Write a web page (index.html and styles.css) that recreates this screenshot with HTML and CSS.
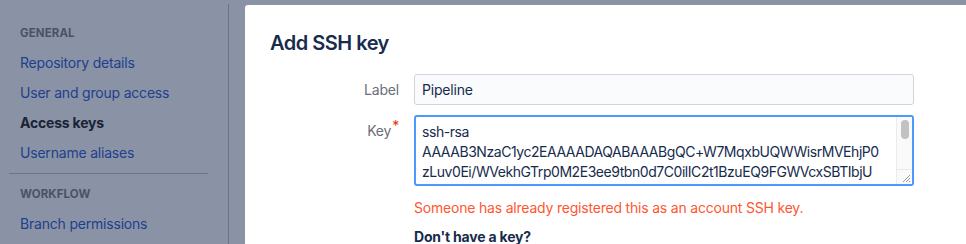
FILE: index.html
```html
<!DOCTYPE html>
<html lang="en">
    <head>
        <meta charset="utf-8" />
        <title>Add SSH key</title>
        <link rel="stylesheet" href="styles.css">
    </head>
    <body>
        <div class="page">
            <aside class="sidebar">
                <h4 class="nav-heading">General</h4>
                <ul class="nav-list">
                    <li><a href="#">Repository details</a></li>
                    <li><a href="#">User and group access</a></li>
                    <li class="current">Access keys</li>
                    <li><a href="#">Username aliases</a></li>
                </ul>
                <hr class="nav-divider">
                <h4 class="nav-heading">Workflow</h4>
                <ul class="nav-list">
                    <li><a href="#">Branch permissions</a></li>
                </ul>
            </aside>
            <div class="rule"></div>
            <main class="dialog">
                <h2 class="dialog-title">Add SSH key</h2>
                <form class="form">
                    <div class="field">
                        <label for="label">Label</label>
                        <input type="text" id="label" class="text-input" value="Pipeline">
                    </div>
                    <div class="field">
                        <label for="key">Key<span class="required">*</span></label>
                        <div class="field-body">
                            <div class="key-wrap">
                                <textarea id="key" class="key-input" spellcheck="false">ssh-rsa
AAAAB3NzaC1yc2EAAAADAQABAAABgQC+W7MqxbUQWWisrMVEhjP0
zLuv0Ei/WVekhGTrp0M2E3ee9tbn0d7C0ilIC2t1BzuEQ9FGWVcxSBTIbjU
Xk2pQ7vR1mNcd8YtLs0aZ3uHfWq9eJbGt4oKi6nPyVx5rDlMs2TgA7hCwE
user@pipeline</textarea>
                                <span class="scrollbar">
                                    <span class="thumb"></span>
                                    <span class="grip">
                                        <svg width="9" height="9" viewBox="0 0 9 9"><path d="M1 8L8 1M4 8L8 4M7 8L8 7" stroke="#8c8c8c" stroke-width="0.9" fill="none"/></svg>
                                    </span>
                                </span>
                            </div>
                            <p class="error">Someone has already registered this as an account SSH key.</p>
                            <h5 class="hint">Don't have a key?</h5>
                        </div>
                    </div>
                </form>
            </main>
        </div>
    </body>
</html>
```

FILE: styles.css
```css
* {
    margin: 0;
    padding: 0;
    box-sizing: border-box;
    list-style: none;
    font-family: "Inter", "Noto Sans", sans-serif;
}

body {
    background: #8a93a6;
    overflow: hidden;
}

.page {
    display: flex;
    height: 244px;
    padding-top: 4px;
}

.sidebar {
    width: 228px;
    padding: 22px 20px 0 9px;
    flex-shrink: 0;
}

.nav-heading {
    padding-left: 11px;
    font-size: 11.5px;
    font-weight: 700;
    text-transform: uppercase;
    color: #4b5262;
    line-height: 14px;
    margin-bottom: 8px;
    letter-spacing: 0.1px;
}

.nav-list li {
    padding-left: 11px;
    font-size: 14px;
    line-height: 30px;
    color: #1b2235;
    letter-spacing: -0.2px;
}

.nav-list a {
    color: #213f8c;
    text-decoration: none;
}

.nav-list .current {
    font-weight: 700;
}

.nav-divider {
    border: none;
    border-top: 1px solid #6b7384;
    margin: 5px 0 13px;
}

.rule {
    width: 1px;
    background: #6b7386;
    flex-shrink: 0;
}

.dialog {
    flex: 1;
    margin-left: 16px;
    margin-top: 1px;
    background: #fff;
    border-radius: 3px 0 0 0;
    padding: 26px 25px 0;
}

.dialog-title {
    font-size: 20px;
    font-weight: 600;
    color: #172b4d;
    line-height: 24px;
    letter-spacing: -0.5px;
}

.form {
    margin-top: 19px;
    display: flex;
    flex-direction: column;
    gap: 10px;
}

.field {
    display: flex;
    gap: 15px;
}

.field label {
    width: 129px;
    text-align: right;
    font-size: 14px;
    line-height: 31px;
    color: #6b6f78;
    letter-spacing: -0.2px;
}

.field label .required {
    color: #de350b;
    position: relative;
    top: -5px;
    margin-left: 1px;
}

.text-input {
    width: 500px;
    height: 31px;
    padding: 0 7px;
    border: 1px solid #d1d4da;
    border-radius: 3px;
    background: #fafbfc;
    font-family: "Inter", sans-serif;
    font-size: 14px;
    letter-spacing: -0.2px;
    color: #172b4d;
    outline: none;
}

.field-body {
    display: flex;
    flex-direction: column;
}

.key-wrap {
    position: relative;
    width: 500px;
    height: 71px;
}

.key-input {
    display: block;
    width: 500px;
    height: 71px;
    padding: 5px 22px 5px 6px;
    border: 2px solid #4c9aff;
    border-radius: 3px;
    font-size: 14px;
    line-height: 20px;
    letter-spacing: -0.45px;
    color: #172b4d;
    white-space: pre;
    overflow: hidden;
    resize: none;
    outline: none;
}

.scrollbar {
    position: absolute;
    top: 2px;
    right: 2px;
    bottom: 2px;
    width: 16px;
    background: #fafafa;
    border-left: 1px solid #ebebeb;
    display: flex;
    flex-direction: column;
    align-items: center;
}

.thumb {
    width: 8px;
    height: 19px;
    margin-top: 3px;
    border-radius: 4px;
    background: #c2c2c2;
}

.grip {
    margin-top: auto;
    width: 100%;
    height: 15px;
    border-top: 1px solid #ebebeb;
    display: flex;
    justify-content: flex-end;
    align-items: flex-end;
    padding: 0 1px 1px 0;
}

.grip svg {
    display: block;
}

.error {
    margin-top: 13px;
    font-size: 14px;
    line-height: 18px;
    letter-spacing: -0.2px;
    color: #ff5630;
}

.hint {
    margin-top: 11px;
    font-size: 14px;
    font-weight: 700;
    line-height: 18px;
    letter-spacing: -0.2px;
    color: #172b4d;
}
```
